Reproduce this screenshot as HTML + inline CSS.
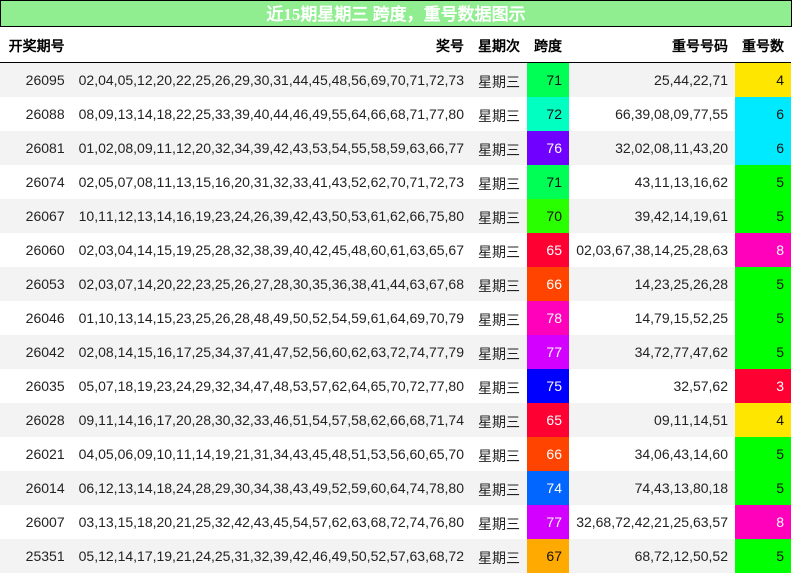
<!DOCTYPE html>
<html><head><meta charset="utf-8"><style>
html,body{margin:0;padding:0;background:#fff}
body{width:792px;height:574px;overflow:hidden;font-family:"Liberation Sans","WenQuanYi Zen Hei",sans-serif;font-size:14px;color:#222;font-kerning:none}
.t{box-sizing:border-box;width:792px;height:27px;border:1px solid #000;background:#90ee90;color:#fff;font:bold 17px/27px "Liberation Serif","WenQuanYi Zen Hei",serif;text-align:center}
table{border-collapse:separate;border-spacing:0;table-layout:fixed;width:791px}
th{padding:3px 7px 0;text-align:right;color:#000;font-weight:bold;border-bottom:1px solid #000;box-sizing:border-box;height:36px;white-space:nowrap}
td{height:34px;padding:0 7px;text-align:right;box-sizing:border-box;white-space:nowrap;vertical-align:middle;line-height:20px}
th:first-child,td:first-child{padding-right:6.4px}
tr:nth-child(odd) td{background:#f3f3f3}
tr td.w{color:#fff}tr td.k{color:#111}
td.c{text-align:center;padding:0}
td.c span{position:relative;top:2px}
</style></head><body>
<div class="t">近15期星期三 跨度，重号数据图示</div>
<table><colgroup><col style="width:71px"><col style="width:400px"><col style="width:56px"><col style="width:42px"><col style="width:166px"><col style="width:56px"></colgroup>
<thead><tr><th>开奖期号</th><th>奖号</th><th>星期次</th><th>跨度</th><th>重号号码</th><th>重号数</th></tr></thead>
<tbody>
<tr><td>26095</td><td>02,04,05,12,20,22,25,26,29,30,31,44,45,48,56,69,70,71,72,73</td><td class="c"><span>星期三</span></td><td class="k" style="background:#00ff55">71</td><td>25,44,22,71</td><td class="k" style="background:#ffe600">4</td></tr>
<tr><td>26088</td><td>08,09,13,14,18,22,25,33,39,40,44,46,49,55,64,66,68,71,77,80</td><td class="c"><span>星期三</span></td><td class="k" style="background:#00ffc0">72</td><td>66,39,08,09,77,55</td><td class="k" style="background:#00eaff">6</td></tr>
<tr><td>26081</td><td>01,02,08,09,11,12,20,32,34,39,42,43,53,54,55,58,59,63,66,77</td><td class="c"><span>星期三</span></td><td class="w" style="background:#7000ff">76</td><td>32,02,08,11,43,20</td><td class="k" style="background:#00eaff">6</td></tr>
<tr><td>26074</td><td>02,05,07,08,11,13,15,16,20,31,32,33,41,43,52,62,70,71,72,73</td><td class="c"><span>星期三</span></td><td class="k" style="background:#00ff55">71</td><td>43,11,13,16,62</td><td class="k" style="background:#00ff00">5</td></tr>
<tr><td>26067</td><td>10,11,12,13,14,16,19,23,24,26,39,42,43,50,53,61,62,66,75,80</td><td class="c"><span>星期三</span></td><td class="k" style="background:#2aff00">70</td><td>39,42,14,19,61</td><td class="k" style="background:#00ff00">5</td></tr>
<tr><td>26060</td><td>02,03,04,14,15,19,25,28,32,38,39,40,42,45,48,60,61,63,65,67</td><td class="c"><span>星期三</span></td><td class="w" style="background:#ff0033">65</td><td>02,03,67,38,14,25,28,63</td><td class="w" style="background:#ff00bb">8</td></tr>
<tr><td>26053</td><td>02,03,07,14,20,22,23,25,26,27,28,30,35,36,38,41,44,63,67,68</td><td class="c"><span>星期三</span></td><td class="w" style="background:#ff4400">66</td><td>14,23,25,26,28</td><td class="k" style="background:#00ff00">5</td></tr>
<tr><td>26046</td><td>01,10,13,14,15,23,25,26,28,48,49,50,52,54,59,61,64,69,70,79</td><td class="c"><span>星期三</span></td><td class="w" style="background:#ff00bb">78</td><td>14,79,15,52,25</td><td class="k" style="background:#00ff00">5</td></tr>
<tr><td>26042</td><td>02,08,14,15,16,17,25,34,37,41,47,52,56,60,62,63,72,74,77,79</td><td class="c"><span>星期三</span></td><td class="w" style="background:#d400ff">77</td><td>34,72,77,47,62</td><td class="k" style="background:#00ff00">5</td></tr>
<tr><td>26035</td><td>05,07,18,19,23,24,29,32,34,47,48,53,57,62,64,65,70,72,77,80</td><td class="c"><span>星期三</span></td><td class="w" style="background:#0000ff">75</td><td>32,57,62</td><td class="w" style="background:#ff0033">3</td></tr>
<tr><td>26028</td><td>09,11,14,16,17,20,28,30,32,33,46,51,54,57,58,62,66,68,71,74</td><td class="c"><span>星期三</span></td><td class="w" style="background:#ff0033">65</td><td>09,11,14,51</td><td class="k" style="background:#ffe600">4</td></tr>
<tr><td>26021</td><td>04,05,06,09,10,11,14,19,21,31,34,43,45,48,51,53,56,60,65,70</td><td class="c"><span>星期三</span></td><td class="w" style="background:#ff4400">66</td><td>34,06,43,14,60</td><td class="k" style="background:#00ff00">5</td></tr>
<tr><td>26014</td><td>06,12,13,14,18,24,28,29,30,34,38,43,49,52,59,60,64,74,78,80</td><td class="c"><span>星期三</span></td><td class="w" style="background:#0066ff">74</td><td>74,43,13,80,18</td><td class="k" style="background:#00ff00">5</td></tr>
<tr><td>26007</td><td>03,13,15,18,20,21,25,32,42,43,45,54,57,62,63,68,72,74,76,80</td><td class="c"><span>星期三</span></td><td class="w" style="background:#d400ff">77</td><td>32,68,72,42,21,25,63,57</td><td class="w" style="background:#ff00bb">8</td></tr>
<tr><td>25351</td><td>05,12,14,17,19,21,24,25,31,32,39,42,46,49,50,52,57,63,68,72</td><td class="c"><span>星期三</span></td><td class="k" style="background:#ffaa00">67</td><td>68,72,12,50,52</td><td class="k" style="background:#00ff00">5</td></tr>
</tbody></table>
</body></html>
